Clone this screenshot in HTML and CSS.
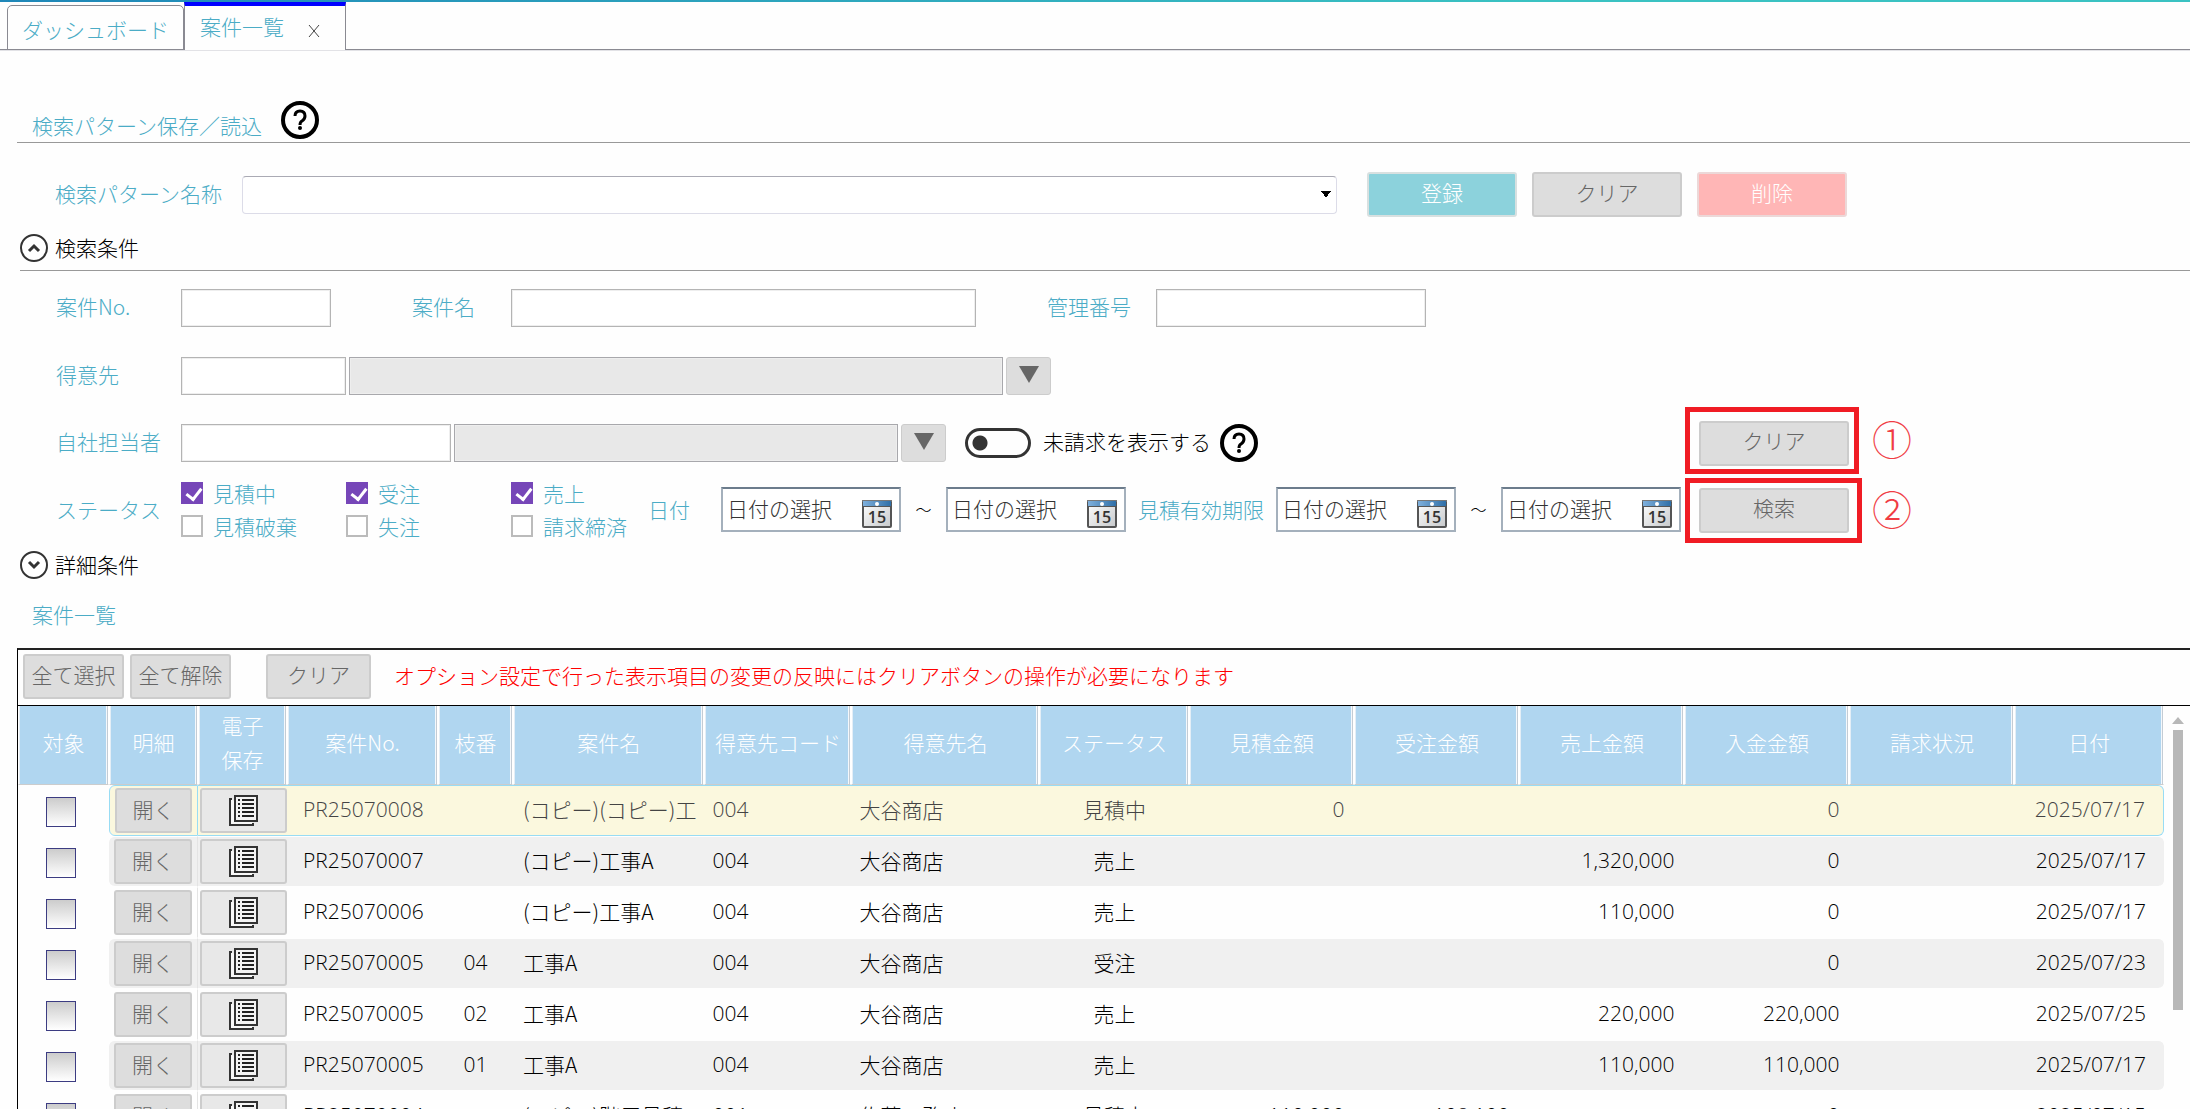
FILE: index.html
```html
<!DOCTYPE html>
<html lang="ja">
<head>
<meta charset="utf-8">
<title>案件一覧</title>
<link rel="stylesheet" href="styles.css">
</head>
<body>
<svg class="defs" aria-hidden="true">
  <defs>
    <linearGradient id="cal-top" x1="0" x2="1"><stop offset="0" stop-color="#7fb0dc"/><stop offset="1" stop-color="#2f6fa8"/></linearGradient>
    <linearGradient id="cal-page" x1="0" x2="1" y1="0" y2="1"><stop offset="0" stop-color="#fff"/><stop offset="1" stop-color="#c8cacc"/></linearGradient>
    <symbol id="calendar" viewBox="0 0 30 28">
      <rect x="1" y="1" width="28" height="26" rx="1" fill="url(#cal-page)" stroke="#555" stroke-width="2"/>
      <rect x="1" y="1" width="28" height="5" fill="url(#cal-top)"/>
      <rect x="0" y="0" width="30" height="1" fill="#777"/>
      <rect x="0" y="6" width="30" height="1" fill="#555"/>
      <circle cx="15" cy="4" r="2" fill="#fff"/>
      <text x="15" y="23" text-anchor="middle" class="cal-num">15</text>
    </symbol>
    <symbol id="sheet" viewBox="0 0 30 32">
      <path d="M3 5H1V31H24V29" fill="#f8f8f8" stroke="#333" stroke-width="2"/>
      <rect x="6" y="2" width="22" height="25" fill="#f4f4f4" stroke="#333" stroke-width="2"/>
      <path d="M9 6h2M13 6h12M9 10h2M13 10h12M9 14h2M13 14h12M9 18h2M13 18h12M9 22h2M13 22h12" stroke="#222" stroke-width="2"/>
    </symbol>
    <symbol id="help" viewBox="0 0 38 38">
      <circle cx="19" cy="19" r="17" fill="#fff" stroke="#000" stroke-width="4"/>
      <path d="M14 15q0-5 5-5t5 5q0 3-3 5-2 1-2 4" fill="none" stroke="#000" stroke-width="3"/>
      <circle cx="19" cy="27" r="2" fill="#000"/>
    </symbol>
    <symbol id="chevron" viewBox="0 0 28 28">
      <circle cx="14" cy="14" r="13" fill="#fff" stroke="#333" stroke-width="2"/>
      <path d="M9 17l5-5 5 5" fill="none" stroke="#333" stroke-width="3"/>
    </symbol>
  </defs>
</svg>

<nav class="tabs">
  <a class="tab" href="#dashboard">ダッシュボード</a>
  <div class="tab tab-active"><a href="#projects">案件一覧</a><button class="tab-close" aria-label="閉じる"><svg viewBox="0 0 12 12"><path d="M1 0l10 12M11 0L1 12"/></svg></button></div>
</nav>

<main class="page">
  <header class="pattern-head">
    <h2>検索パターン保存／読込</h2>
    <svg class="help-icon" role="img" aria-label="ヘルプ"><use href="#help"/></svg>
  </header>
  <div class="pattern-row">
    <label for="pattern">検索パターン名称</label>
    <select id="pattern"><option></option></select>
    <button class="btn btn-wide btn-save">登録</button>
    <button class="btn btn-wide">クリア</button>
    <button class="btn btn-wide btn-delete">削除</button>
  </div>

  <button class="fold fold-open"><svg><use href="#chevron"/></svg><span>検索条件</span></button>

  <form class="search">
    <div class="row">
      <label class="name" for="no">案件No.</label><input class="w-no" type="text" id="no">
      <label class="name name-title" for="title">案件名</label><input class="w-title" type="text" id="title">
      <label class="name name-mgmt" for="mgmt">管理番号</label><input class="w-mgmt" type="text" id="mgmt">
    </div>
    <div class="row">
      <label class="name" for="customer">得意先</label><input class="w-code" type="text" id="customer">
      <input class="w-customer" type="text" readonly aria-label="得意先名">
      <button type="button" class="btn btn-pick" aria-label="得意先を選択"><svg viewBox="0 0 20 17"><path d="M0 0h20L10 17z"/></svg></button>
    </div>
    <div class="row">
      <label class="name" for="staff">自社担当者</label><input class="w-mgmt" type="text" id="staff">
      <input class="w-staff" type="text" readonly aria-label="担当者名">
      <button type="button" class="btn btn-pick" aria-label="担当者を選択"><svg viewBox="0 0 20 17"><path d="M0 0h20L10 17z"/></svg></button>
      <label class="switch"><input type="checkbox"><span>未請求を表示する</span></label>
      <svg class="help-icon" role="img" aria-label="ヘルプ"><use href="#help"/></svg>
    </div>
    <div class="row row-status">
      <span class="name">ステータス</span>
      <div class="checks">
        <label><input type="checkbox" checked>見積中</label>
        <label><input type="checkbox" checked>受注</label>
        <label><input type="checkbox" checked>売上</label>
        <label><input type="checkbox">見積破棄</label>
        <label><input type="checkbox">失注</label>
        <label><input type="checkbox">請求締済</label>
      </div>
      <span class="name-date">日付</span>
      <button type="button" class="date"><span>日付の選択</span><svg><use href="#calendar"/></svg></button>
      <span class="tilde">～</span>
      <button type="button" class="date"><span>日付の選択</span><svg><use href="#calendar"/></svg></button>
      <span class="name-limit">見積有効期限</span>
      <button type="button" class="date"><span>日付の選択</span><svg><use href="#calendar"/></svg></button>
      <span class="tilde">～</span>
      <button type="button" class="date"><span>日付の選択</span><svg><use href="#calendar"/></svg></button>
    </div>
    <div class="actions">
      <div class="mark"><button type="reset" class="btn btn-wide">クリア</button></div><span class="mark-no">①</span>
      <div class="mark mark-search"><button type="button" class="btn btn-wide">検索</button></div><span class="mark-no">②</span>
    </div>
  </form>

  <button class="fold fold-closed"><svg><use href="#chevron"/></svg><span>詳細条件</span></button>
  <h2 class="list-title">案件一覧</h2>

  <section class="panel">
    <div class="toolbar">
      <button class="btn">全て選択</button>
      <button class="btn">全て解除</button>
      <button class="btn btn-reset">クリア</button>
      <p>オプション設定で行った表示項目の変更の反映にはクリアボタンの操作が必要になります</p>
    </div>
    <div class="grid">
      <table>
        <colgroup>
          <col class="c-check"><col class="c-open"><col class="c-open"><col class="c-no"><col class="c-branch"><col class="c-title"><col class="c-code"><col class="c-title"><col class="c-status"><col class="c-money"><col class="c-money"><col class="c-money"><col class="c-money"><col class="c-money"><col>
        </colgroup>
        <thead>
          <tr><th>対象</th><th>明細</th><th>電子<br>保存</th><th>案件No.</th><th>枝番</th><th>案件名</th><th>得意先コード</th><th>得意先名</th><th>ステータス</th><th>見積金額</th><th>受注金額</th><th>売上金額</th><th>入金金額</th><th>請求状況</th><th>日付</th></tr>
        </thead>
        <tbody>
          <tr class="selected"><td><input type="checkbox" aria-label="対象"></td><td><button class="btn">開く</button></td><td><button class="btn btn-doc" aria-label="電子保存"><svg><use href="#sheet"/></svg></button></td><td>PR25070008</td><td></td><td>(コピー)(コピー)工</td><td>004</td><td>大谷商店</td><td>見積中</td><td>0</td><td></td><td></td><td>0</td><td></td><td>2025/07/17</td></tr>
          <tr><td><input type="checkbox" aria-label="対象"></td><td><button class="btn">開く</button></td><td><button class="btn btn-doc" aria-label="電子保存"><svg><use href="#sheet"/></svg></button></td><td>PR25070007</td><td></td><td>(コピー)工事A</td><td>004</td><td>大谷商店</td><td>売上</td><td></td><td></td><td>1,320,000</td><td>0</td><td></td><td>2025/07/17</td></tr>
          <tr><td><input type="checkbox" aria-label="対象"></td><td><button class="btn">開く</button></td><td><button class="btn btn-doc" aria-label="電子保存"><svg><use href="#sheet"/></svg></button></td><td>PR25070006</td><td></td><td>(コピー)工事A</td><td>004</td><td>大谷商店</td><td>売上</td><td></td><td></td><td>110,000</td><td>0</td><td></td><td>2025/07/17</td></tr>
          <tr><td><input type="checkbox" aria-label="対象"></td><td><button class="btn">開く</button></td><td><button class="btn btn-doc" aria-label="電子保存"><svg><use href="#sheet"/></svg></button></td><td>PR25070005</td><td>04</td><td>工事A</td><td>004</td><td>大谷商店</td><td>受注</td><td></td><td></td><td></td><td>0</td><td></td><td>2025/07/23</td></tr>
          <tr><td><input type="checkbox" aria-label="対象"></td><td><button class="btn">開く</button></td><td><button class="btn btn-doc" aria-label="電子保存"><svg><use href="#sheet"/></svg></button></td><td>PR25070005</td><td>02</td><td>工事A</td><td>004</td><td>大谷商店</td><td>売上</td><td></td><td></td><td>220,000</td><td>220,000</td><td></td><td>2025/07/25</td></tr>
          <tr><td><input type="checkbox" aria-label="対象"></td><td><button class="btn">開く</button></td><td><button class="btn btn-doc" aria-label="電子保存"><svg><use href="#sheet"/></svg></button></td><td>PR25070005</td><td>01</td><td>工事A</td><td>004</td><td>大谷商店</td><td>売上</td><td></td><td></td><td>110,000</td><td>110,000</td><td></td><td>2025/07/17</td></tr>
          <tr><td><input type="checkbox" aria-label="対象"></td><td><button class="btn">開く</button></td><td><button class="btn btn-doc" aria-label="電子保存"><svg><use href="#sheet"/></svg></button></td><td>PR25070004</td><td></td><td>(コピー)階層見積</td><td>001</td><td>佐藤工務店</td><td>見積中</td><td>110,000</td><td>108,100</td><td></td><td>0</td><td></td><td>2025/07/15</td></tr>
        </tbody>
      </table>
      <div class="scrollbar"><svg viewBox="0 0 12 7"><path d="M6 0l6 7H0z"/></svg><span></span></div>
    </div>
  </section>
</main>
</body>
</html>
```
FILE: styles.css
```css
* { box-sizing: border-box; }
body {
  margin: 0;
  height: 100vh;
  overflow: hidden;
  display: flex;
  flex-direction: column;
  background: #fefefe;
  color: #000;
  font: 300 21px/30px "Noto Sans CJK JP", sans-serif;
}
button, input, select { font: inherit; color: inherit; margin: 0; padding: 0; }
h2, p { margin: 0; font: inherit; }
a { color: inherit; text-decoration: none; }
.defs { position: absolute; width: 0; height: 0; }
.cal-num { font: 600 16px "Open Sans", sans-serif; fill: #333; }

/* tabs */
.tabs {
  flex: none;
  display: flex;
  align-items: flex-end;
  height: 50px;
  padding-left: 7px;
  color: #4bacc6;
  background: linear-gradient(90deg, #1f87b8, #3ac2c2 70%) top / 100% 2px no-repeat;
  box-shadow: inset 0 -1px #8a8a92, 0 1px #e2e2e6;
}
.tab {
  height: 45px;
  width: 177px;
  padding-top: 8px;
  text-align: center;
  border: 1px solid #8a8a92;
  border-radius: 5px 5px 0 0;
}
.tab-active {
  display: flex;
  gap: 24px;
  height: 48px;
  width: 162px;
  padding: 5px 0 0 15px;
  background: #fefefe;
  border-top: 4px solid #00f;
  border-bottom: 0;
  border-radius: 0;
}
.tab-close { border: 0; background: none; width: 12px; height: 34px; }
.tab-close svg { width: 12px; height: 12px; stroke: #444; fill: none; }

.page { flex: 1; min-height: 0; display: flex; flex-direction: column; padding-left: 17px; }

/* search pattern */
.pattern-head {
  flex: none;
  display: flex;
  gap: 19px;
  height: 93px;
  padding: 51px 0 0 15px;
  color: #4bacc6;
  border-bottom: 1px solid #999;
}
.pattern-head h2 { padding-top: 9px; }
.help-icon { width: 38px; height: 38px; flex: none; }
.pattern-row { display: flex; align-items: center; gap: 15px; padding: 29px 0 0 38px; color: #4bacc6; }
.pattern-row label { width: 172px; padding-bottom: 4px; }
.pattern-row select {
  flex: 1;
  max-width: 1095px;
  height: 38px;
  margin-right: 15px;
  appearance: none;
  border: 1px solid #dcdce8;
  border-top-color: #aaaab4;
  border-radius: 4px;
  background: conic-gradient(from -35deg at 50% 100%, #000 70deg, transparent 0) right 5px center / 10px 7px no-repeat, #fff;
}

.btn {
  height: 45px;
  padding-bottom: 5px;
  background: #ddd;
  border: 2px solid #ccc;
  border-radius: 3px;
  color: #666;
}
.btn-wide { width: 150px; flex: none; }
.btn-save { background: #8cd2dc; border-color: #d8e0e0; color: #fff; }
.btn-delete { background: #ffb6b6; border-color: #ecd8d8; color: #fff; }

.fold {
  flex: none;
  display: flex;
  align-items: center;
  gap: 7px;
  padding: 0;
  border: 0;
  background: none;
  text-align: left;
}
.fold span { padding-bottom: 2px; }
.fold svg { width: 28px; height: 28px; }
.fold-open { height: 54px; padding-top: 8px; margin-left: 3px; border-bottom: 1px solid #999; }
.fold-closed { height: 34px; margin: 9px 0 0 3px; }
.fold-closed svg { transform: rotate(180deg); }

/* search form */
.search { position: relative; flex: none; padding: 18px 0 0 39px; }
.row { display: flex; align-items: center; gap: 3px; height: 38px; margin-bottom: 30px; }
.row + .row { margin-bottom: 29px; }
.name { width: 122px; padding-bottom: 4px; color: #4bacc6; }
.name-title { width: 96px; margin-left: 78px; }
.name-mgmt { width: 106px; margin-left: 68px; }
.row input[type="text"] { height: 38px; background: #fff; border: 1px solid #b4b4b4; box-shadow: inset 0 0 0 1px #eee; border-radius: 0; }
.row input[readonly] { background: #e8e8e8; border-color: #a8a8ac; }
.w-no { width: 150px; }
.w-title { width: 465px; }
.w-mgmt { width: 270px; }
.w-code { width: 165px; }
.w-customer { width: 654px; }
.w-staff { width: 444px; }
.btn-pick { width: 45px; height: 38px; border-width: 1px; }
.btn-pick svg { width: 20px; height: 17px; fill: #666; }
.switch { display: flex; align-items: center; gap: 12px; margin: 0 6px 0 16px; }
.switch span { padding-bottom: 4px; }
.switch input {
  appearance: none;
  width: 66px;
  height: 30px;
  border: 3px solid #333;
  border-radius: 15px;
  background: radial-gradient(circle at 12px 12px, #333 7px, transparent 8px);
}
.row.row-status { height: 60px; margin: -12px 0 0; gap: 0; }
.row-status .name { width: 125px; padding: 0; }
.checks { display: grid; grid-template-columns: 165px 165px 137px; row-gap: 3px; color: #4bacc6; }
.checks label { display: flex; gap: 10px; align-items: center; white-space: nowrap; }
.checks input {
  appearance: none;
  width: 22px;
  height: 22px;
  border: 2px solid #bbb;
  background: #fff;
}
.checks input:checked { border: 0; background: #7646b8; }
.checks input:checked::before {
  content: "";
  display: block;
  width: 7px;
  height: 12px;
  margin: 3px 0 0 8px;
  border: solid #fff;
  border-width: 0 3px 3px 0;
  transform: rotate(38deg);
}
.name-date { width: 73px; color: #4bacc6; }
.name-limit { width: 150px; text-align: center; color: #4bacc6; white-space: nowrap; }
.tilde { width: 45px; text-align: center; font-size: 16px; }
.date {
  display: flex;
  align-items: center;
  justify-content: space-between;
  width: 180px;
  height: 45px;
  padding: 0 7px 0 4px;
  border: 2px solid #a4b0bc;
  border-top-color: #6c7c8c;
  background: #fff;
  color: #333;
}
.date span { padding-bottom: 3px; }
.date svg { width: 30px; height: 28px; margin-top: 10px; }

/* annotated actions beside the form */
.actions {
  position: absolute;
  left: 1668px;
  top: 136px;
  display: grid;
  grid-template-columns: 177px auto;
  align-items: center;
  gap: 4px 10px;
}
.mark { width: 174px; height: 67px; padding: 9px; border: 5px solid #f01c24; }
.mark-search { width: 177px; height: 65px; padding-top: 5px; }
.mark .btn { padding-bottom: 7px; }
.mark-no { padding-bottom: 6px; font-size: 40px; color: #f03c44; }

/* list */
.list-title { flex: none; padding: 17px 0 0 15px; height: 66px; color: #4bacc6; }
.panel { flex: 1; min-height: 0; display: flex; flex-direction: column; border-left: 1px solid #000; border-top: 2px solid #222; }
.toolbar { flex: none; display: flex; gap: 6px; height: 56px; padding: 4px 0 0 5px; border-bottom: 1px solid #000; }
.toolbar .btn { width: 101px; }
.toolbar .btn-reset { width: 105px; margin: 0 17px 0 29px; }
.toolbar p { color: #f00; padding-top: 6px; }
.grid { flex: 1; min-height: 0; overflow: hidden; display: flex; align-items: flex-start; }
table { flex: 1; min-width: 0; table-layout: fixed; border-spacing: 0; }
.c-check { width: 91px; }
.c-open { width: 89px; }
.c-no { width: 151px; }
.c-branch { width: 75px; }
.c-title { width: 188px; }
.c-code { width: 147px; }
.c-status { width: 150px; }
.c-money { width: 165px; }
th {
  height: 79px;
  padding: 0 0 6px;
  font-weight: 300;
  line-height: 34px;
  color: #fff;
  background: #b0d6f0;
  border: solid #fff;
  border-width: 0 1px;
  border-bottom: 1px solid #ccc;
  box-shadow: inset -1px 0 #c4ccd4, inset -2px 0 #f4f8fc, inset 1px 0 #e4eef6;
  white-space: nowrap;
}
td {
  height: 51px;
  padding: 0 8px;
  border: solid transparent;
  border-width: 1px 0;
  background-clip: padding-box;
  white-space: nowrap;
  overflow: hidden;
}
tbody tr:nth-child(even) td:not(:first-child) { background-color: #f0f0f0; }
.selected td { color: #444; }
.selected td:not(:first-child) { background-color: #fbf8de; border-color: #98dcf4; }
td:nth-child(2) { border-radius: 6px 0 0 6px; padding: 0 5px; border-right: 1px solid #e4e4e4; }
.selected td:nth-child(2) { border-left: 1px solid #98dcf4; }
td:last-child { border-radius: 0 6px 6px 0; }
.selected td:last-child { border-right: 1px solid #98dcf4; }
td:first-child { padding: 0 12px 0 6px; text-align: center; }
td:nth-child(3) { padding: 0 0 0 2px; }
td:nth-child(n+4) { padding-bottom: 3px; }
td:nth-child(4) { padding-left: 16px; }
td:nth-child(6) { padding-left: 10px; }
td:nth-child(5), td:nth-child(9) { text-align: center; }
td:nth-child(4), td:nth-child(5), td:nth-child(7), td:nth-child(n+10) { font-family: "Open Sans", "Noto Sans CJK JP", sans-serif; }
td:nth-child(n+10) { padding-right: 10px; text-align: right; }
td:last-child { padding-right: 18px; }
td .btn { display: block; width: 100%; padding-bottom: 4px; }
td .btn-doc { background: #e8e8e8; padding: 0 0 3px; }
td .btn-doc svg { width: 30px; height: 32px; vertical-align: middle; }
td input {
  appearance: none;
  width: 30px;
  height: 30px;
  border: 1px solid #3c3c82;
  background: linear-gradient(#ccc, #fff);
  vertical-align: middle;
}
.scrollbar { flex: none; width: 26px; padding: 11px 7px 0 8px; display: flex; flex-direction: column; align-items: center; gap: 6px; }
.scrollbar svg { width: 12px; height: 7px; fill: #b8b8b8; }
.scrollbar span { width: 10px; height: 280px; background: #b8b8b8; }
```
